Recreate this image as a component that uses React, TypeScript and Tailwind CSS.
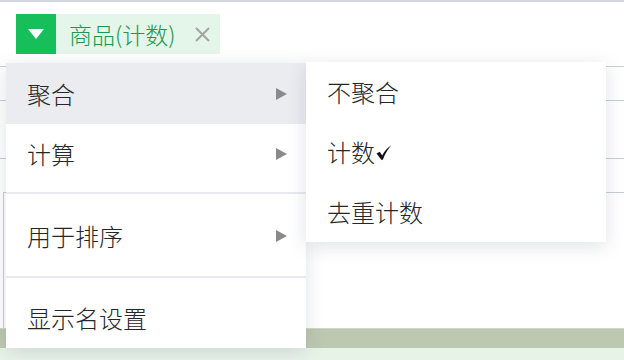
const font = { fontFamily: '"Noto Sans CJK SC", "Noto Sans", sans-serif' };

function Arrow() {
  return (
    <svg width="11" height="12" viewBox="0 0 11 12" className="shrink-0">
      <path d="M0 0 L11 6 L0 12 Z" fill="#8a8a8a" />
    </svg>
  );
}

function MenuItem({
  label,
  hasSub,
  active,
  className = "",
}: {
  label: React.ReactNode;
  hasSub?: boolean;
  active?: boolean;
  className?: string;
}) {
  return (
    <div
      className={
        "flex items-center justify-between pl-[21px] pr-[19px] text-[24px] font-light leading-none text-[#262626] " +
        (active ? "bg-[#ebecf0] " : "") +
        className
      }
    >
      <span className="flex items-center">{label}</span>
      {hasSub && <Arrow />}
    </div>
  );
}

export default function App() {
  return (
    <div className="relative h-[360px] w-[624px] overflow-hidden bg-white" style={font}>
      <div className="h-[2px] bg-[#d3d6df]" />
      <div className="flex h-[64px] items-start pl-4 pt-3">
        <div className="flex h-10 items-center bg-[#e4f6e9]">
          <div className="flex h-10 w-10 items-center justify-center bg-[#17bf5a]">
            <svg width="16" height="10" viewBox="0 0 16 10">
              <path d="M0 0 L16 0 L8 10 Z" fill="#fff" />
            </svg>
          </div>
          <span className="pl-[13px] text-[23px] font-light leading-none text-[#21954d]">商品(计数)</span>
          <svg width="17" height="17" viewBox="0 0 17 17" className="ml-[18px] mr-[9px]">
            <path d="M2 2 L15 15 M15 2 L2 15" stroke="#a3a3a3" strokeWidth="2" />
          </svg>
        </div>
      </div>
      <div className="h-px bg-[#c9cdd9]" />
      <div className="h-[33px]" />
      <div className="h-px bg-[#c9cdd9]" />
      <div className="h-[57px]" />
      <div className="h-px bg-[#c9cdd9]" />
      <div className="h-[33px]" />
      <div className="ml-[3px] h-[136px] border-l border-t border-[#c9cdd9]" />
      <div className="h-5 border-t border-[#cfd6c6] bg-[#bdc8b0]" />
      <div className="h-3 bg-[#e8f3e8]" />

      <div className="absolute left-[6px] top-[63px] flex h-[285px] w-[300px] flex-col bg-white shadow-[0_4px_18px_rgba(40,50,80,0.14)]">
        <MenuItem label="聚合" hasSub active className="h-[61px]" />
        <MenuItem label="计算" hasSub className="h-[68px] pb-2" />
        <div className="h-[2px] bg-[#e8e9ee]" />
        <MenuItem label="用于排序" hasSub className="h-[82px] pt-[2px]" />
        <div className="h-[2px] bg-[#e8e9ee]" />
        <MenuItem label="显示名设置" className="h-[70px] pt-[10px]" />
      </div>

      <div className="absolute left-[306px] top-[62px] flex h-[180px] w-[300px] flex-col bg-white shadow-[0_4px_18px_rgba(40,50,80,0.14)]">
        <MenuItem label="不聚合" className="h-[60px]" />
        <MenuItem
          label={
            <>
              计数
              <svg width="16" height="15" viewBox="0 0 15 14" className="ml-[1px] mt-[1px]">
                <path d="M0.5 8 L3.5 6.3 L5.8 9.8 Q9 3.5 14.5 0.3 Q9.8 5 6.4 13.7 L5 13.7 Z" fill="#111" />
              </svg>
            </>
          }
          className="h-[60px]"
        />
        <MenuItem label="去重计数" className="h-[60px]" />
      </div>
    </div>
  );
}
